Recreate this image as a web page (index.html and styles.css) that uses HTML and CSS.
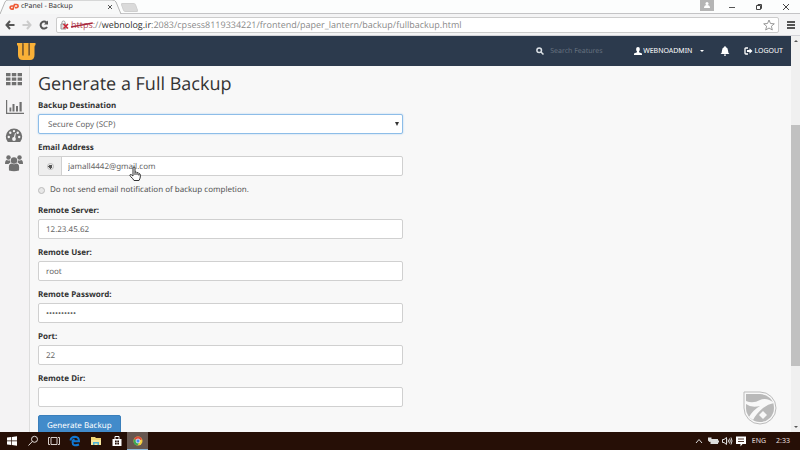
FILE: index.html
```html
<!DOCTYPE html>
<html lang="en">
<head>
  <meta charset="UTF-8">
  <title>cPanel - Backup</title>
  <link rel="stylesheet" href="styles.css">
</head>
<body>

  <div class="tabstrip">
    <div class="tab">
      <svg class="tab-shape" viewBox="0 0 122 14" preserveAspectRatio="none"><path d="M0 14 L5 2 Q6 0 8 0 H112 Q115 0 116 2 L121 14" fill="#f7f8f8" stroke="#b5b5b5"/></svg>
      <svg class="favicon" viewBox="0 0 10 8" fill="none" stroke="#ee5a35" stroke-width="1.700"><path d="M4.500 3 H2.800 A1.600 1.600 0 0 0 2.800 6.200 H4 L5.500 1.500 H7.500 A1.600 1.600 0 0 1 7.500 4.700 H6"/></svg>
      <span class="tab-title">cPanel - Backup</span>
      <button class="tab-close" aria-label="Close tab"><svg viewBox="0 0 6 6" stroke="#555"><path d="M1 1 L5 5 M5 1 L1 5"/></svg></button>
    </div>
    <button class="new-tab" aria-label="New tab"></button>
    <div class="window-buttons">
      <button class="profile" aria-label="Profile"><svg viewBox="0 0 14 11" fill="#fff"><circle cx="7" cy="3.500" r="1.500"/><path d="M4 8 Q4 5 7 5 Q10 5 10 8 Z"/></svg></button>
      <button aria-label="Minimize"><svg viewBox="0 0 8 8" stroke="#555"><path d="M1 4.500 H7"/></svg></button>
      <button aria-label="Restore"><svg viewBox="0 0 8 8" fill="none" stroke="#444"><path d="M1.500 2.500 H5.500 V6.500 H1.500 Z M3 2 V1.500 H6.500 V5.500 H6"/></svg></button>
      <button aria-label="Close"><svg viewBox="0 0 8 8" stroke="#444"><path d="M1 1 L7 7 M7 1 L1 7"/></svg></button>
    </div>
  </div>

  <div class="toolbar">
    <button aria-label="Back"><svg viewBox="0 0 10 10" fill="none" stroke="#555" stroke-width="2"><path d="M9.500 5 H1.500 M5 1 L1.500 5 L5 9"/></svg></button>
    <button aria-label="Forward"><svg viewBox="0 0 10 10" fill="none" stroke="#ccc" stroke-width="2"><path d="M.5 5 H8.500 M5 1 L8.500 5 L5 9"/></svg></button>
    <button aria-label="Reload"><svg viewBox="0 0 10 10" fill="none" stroke="#555" stroke-width="2"><path d="M8 7 A3.500 3.500 0 1 1 7.500 2.500"/><path d="M9 .5 V4.500 H5 Z" fill="#555" stroke="none"/></svg></button>
    <div class="address">
      <svg class="lock" viewBox="0 0 9 10" fill="none"><path d="M1 4 H6 V9 H1 Z" fill="#ddd" stroke="#999"/><path d="M2 4 V2.500 A1.500 1.500 0 0 1 5 2.500 V4" stroke="#999"/><path d="M3.500 4 L8 8.500 M8 4 L3.500 8.500" stroke="#c23" stroke-width="1.500"/></svg>
      <span class="url"><span class="bad">https<svg viewBox="0 0 22 8" preserveAspectRatio="none"><path d="M0 6 L22 2" stroke="#a8263b" stroke-width="1.300"/></svg></span>://<b>webnolog.ir</b>:2083/cpsess8119334221/frontend/paper_lantern/backup/fullbackup.html</span>
      <svg class="star" viewBox="0 0 12 12" fill="none" stroke="#999"><path d="M6 1 L7.500 4.500 L11.300 4.800 L8.400 7.200 L9.300 11 L6 9 L2.700 11 L3.600 7.200 L.7 4.800 L4.500 4.500 Z"/></svg>
    </div>
    <button aria-label="Menu"><svg viewBox="0 0 10 10" stroke="#555" stroke-width="2"><path d="M1 2 H9 M1 5 H9 M1 8 H9"/></svg></button>
  </div>

  <div class="viewport">
    <div class="page">
      <header class="header">
        <svg class="logo" viewBox="0 0 20 19"><path d="M1 1 H6.500 V12.500 Q6.500 14 7.300 14 V1 H12.700 V14 Q13.500 14 13.500 12.500 V1 H19.500 V3 Q18.500 3.500 18.500 5 V13 Q18.500 18 14 18 H7 Q2 18 2 13 V5 Q2 3.500 1 3 Z" fill="#f9b037"/><path d="M7 1.500 V13 M13.200 1.500 V13" stroke="#7a5528" stroke-width="1.200"/></svg>
        <label class="search">
          <svg viewBox="0 0 8 8" fill="none" stroke="#dce1e6" stroke-width="1.500"><circle cx="3.200" cy="3.200" r="2.300"/><path d="M5 5 L7.500 7.500"/></svg>
          <input type="text" placeholder="Search Features" aria-label="Search Features">
        </label>
        <button class="user">
          <svg viewBox="0 0 8 8" fill="#fff"><path d="M4 0 C6.500 0 6 3.500 5 4.500 V5.300 L8 6.500 V8 H0 V6.500 L3 5.300 V4.500 C2 3.500 1.500 0 4 0 Z"/></svg>
          WEBNOADMIN
          <span class="caret"></span>
        </button>
        <button class="bell" aria-label="Notifications"><svg viewBox="0 0 10 10" fill="#fff"><path d="M5 0 Q5.700 0 5.700 1 Q8 1.600 8 4.500 Q8 7 9.500 8 H.5 Q2 7 2 4.500 Q2 1.600 4.300 1 Q4.300 0 5 0 Z M4 8.500 H6 Q6 10 5 10 Q4 10 4 8.500 Z"/></svg></button>
        <a class="logout" href="#">
          <svg viewBox="0 0 9 8" fill="none" stroke="#fff" stroke-width="1.300"><path d="M4 1 H1.800 Q1 1 1 1.800 V6.200 Q1 7 1.800 7 H4"/><path d="M3 3 H5.500 V1.200 L8.500 4 L5.500 6.800 V5 H3 Z" fill="#fff" stroke="none"/></svg>
          LOGOUT
        </a>
      </header>

      <div class="body">
        <nav class="sidebar">
          <a href="#" aria-label="Home"><svg viewBox="0 0 18 18" fill="#707070"><path d="M1 3 H5.500 V6.300 H1 Z M6.800 3 H11.300 V6.300 H6.800 Z M12.600 3 H17 V6.300 H12.600 Z M1 7.500 H5.500 V10.800 H1 Z M6.800 7.500 H11.300 V10.800 H6.800 Z M12.600 7.500 H17 V10.800 H12.600 Z M1 12 H5.500 V15.300 H1 Z M6.800 12 H11.300 V15.300 H6.800 Z M12.600 12 H17 V15.300 H12.600 Z"/></svg></a>
          <a href="#" aria-label="Statistics"><svg viewBox="0 0 18 18" fill="#707070"><path d="M1 2 H2.200 V14.800 H19 V16 H1 Z M4.500 9.500 H6.300 V13.500 H4.500 Z M7.500 6 H9.500 V13.500 H7.500 Z M11 8 H13 V13.500 H11 Z M14.500 4 H16.700 V13.500 H14.500 Z"/></svg></a>
          <a href="#" aria-label="Dashboard"><svg viewBox="0 0 18 18"><path d="M2.800 16 A8.200 8.200 0 1 1 15.200 16 Z" fill="#707070"/><g fill="#f4f3f4"><circle cx="3.800" cy="11" r="1.200"/><circle cx="5.300" cy="6.800" r="1.200"/><circle cx="9" cy="5.100" r="1.200"/><circle cx="12.700" cy="6.800" r="1.200"/><circle cx="14.200" cy="11" r="1.200"/><circle cx="9" cy="13" r="1.900"/><path d="M8.500 12.500 L10 7 L10.900 7.300 L9.800 13 Z"/></g></svg></a>
          <a href="#" aria-label="Users"><svg viewBox="0 0 18 18" fill="#707070"><circle cx="9" cy="6.500" r="3.200"/><circle cx="3.500" cy="3.500" r="2.200"/><circle cx="14.500" cy="3.500" r="2.200"/><path d="M4 16.500 Q3 9.500 6.500 9.500 Q9 11 11.500 9.500 Q15 9.500 14 16.500 Q9 18 4 16.500 Z M0 10 Q0 6 2 6 Q3.500 7 5 6.300 L5.500 8.500 Q4 9 3.500 10 Z M18 10 Q18 6 16 6 Q14.500 7 13 6.300 L12.500 8.500 Q14 9 14.500 10 Z"/></svg></a>
        </nav>

        <main class="content">
          <h1>Generate a Full Backup</h1>
          <form>
            <div class="field">
              <label for="dest">Backup Destination</label>
              <div class="select">
                <select id="dest">
                  <option>Secure Copy (SCP)</option>
                </select>
              </div>
            </div>
            <div class="field">
              <label for="email">Email Address</label>
              <div class="group">
                <span class="addon"><input type="radio" name="notify" aria-label="Send email notification" checked></span>
                <input type="text" id="email" value="jamall4442@gmail.com">
                <svg class="cursor" viewBox="0 0 12 16" fill="#fff" stroke="#333"><path d="M4 9 V2 Q4 1 5 1 Q6 1 6 2 V6 Q7.500 5.500 8 6.700 Q9.500 6.300 9.800 7.500 Q11.300 7.500 11.300 9 V11 Q11 13 10 14.500 H5 Q4 12.500 1.500 10.500 Q.5 9.500 1 8.800 Q2 8 4 10 Z M6 6 V9 M8 7 V9 M9.800 8 V9.500"/></svg>
              </div>
              <label class="check"><input type="radio" name="notify">Do not send email notification of backup completion.</label>
            </div>
            <div class="field">
              <label for="server">Remote Server:</label>
              <input type="text" id="server" value="12.23.45.62">
            </div>
            <div class="field">
              <label for="user">Remote User:</label>
              <input type="text" id="user" value="root">
            </div>
            <div class="field">
              <label for="password">Remote Password:</label>
              <input type="password" id="password" value="aaaaaaaaaa">
            </div>
            <div class="field">
              <label for="port">Port:</label>
              <input type="text" id="port" value="22">
            </div>
            <div class="field">
              <label for="dir">Remote Dir:</label>
              <input type="text" id="dir">
            </div>
            <button type="button" class="submit">Generate Backup</button>
          </form>
        </main>
      </div>
    </div>

    <div class="scrollbar">
      <span class="arrow up"></span>
      <div class="track"><div class="thumb"></div></div>
      <span class="arrow down"></span>
    </div>

    <svg class="watermark" viewBox="0 0 36 36">
      <path d="M2 2 H18 A16 16 0 1 1 2 18 Z" fill="#f8f8f8" stroke="#bbb"/>
      <path d="M4 4 H18 A14 14 0 1 1 4 18 Z" fill="#b9b9b9"/>
      <path d="M4 11 Q11 14 18 10 Q25 7 32 13 Q26 14 21 18 Q14 24 11 30 L7 27 Q11 20 18 16 Q9 18 4 14 Z" fill="#f8f8f8"/>
      <path d="M21 21 L25 25 L21 29 L17 25 Z" fill="#f8f8f8"/>
    </svg>
  </div>

  <footer class="taskbar">
    <button aria-label="Start"><svg viewBox="0 0 12 12" fill="#fff"><path d="M1 2.500 L5.300 2 V5.600 H1 Z M6 1.900 L11 1.200 V5.600 H6 Z M1 6.300 H5.300 V10 L1 9.500 Z M6 6.300 H11 V10.800 L6 10.100 Z"/></svg></button>
    <button aria-label="Search"><svg viewBox="0 0 12 12" fill="none" stroke="#e5dedb"><circle cx="7.500" cy="4.300" r="3"/><path d="M5.300 6.500 L1.500 10.500"/></svg></button>
    <button aria-label="Task view"><svg viewBox="0 0 12 12" fill="none" stroke="#d8d0cc"><path d="M3 2.500 H9 V9.500 H3 Z M2 2.500 H.5 V9.500 H2 M10 2.500 H11.500 V9.500 H10"/></svg></button>
    <button aria-label="Edge"><svg viewBox="0 0 12 12" fill="none" stroke="#1177d1" stroke-width="2"><path d="M1.500 5.500 Q2 1.800 6 1.800 Q10 2 10 6.300 H4 M10 9.500 Q3.500 12 3.500 7 Q3.500 5 5.500 4.200"/></svg></button>
    <button aria-label="File Explorer"><svg viewBox="0 0 12 12"><path d="M1 2 H5 L6 3 H11 V10 H1 Z" fill="#f3d673"/><path d="M1 5 H11 V10 H1 Z" fill="#f8e79d"/><path d="M3 10 V7 H9 V10 H7.500 V8.500 H4.500 V10 Z" fill="#4bb2d8"/></svg></button>
    <button aria-label="Store"><svg viewBox="0 0 12 12"><path d="M1.500 4 H10.500 V11 H1.500 Z" fill="#fff"/><path d="M4 4 V1.500 H8 V4" fill="none" stroke="#fff"/><path d="M4 5.500 H5.700 V7.200 H4 Z M6.300 5.500 H8 V7.200 H6.300 Z M4 7.800 H5.700 V9.500 H4 Z M6.300 7.800 H8 V9.500 H6.300 Z" fill="#260f06"/></svg></button>
    <button class="active" aria-label="Chrome"><svg viewBox="0 0 12 12"><circle cx="6" cy="6" r="4.500" fill="#f5cd3e"/><path d="M6 6 L2 3.900 A4.500 4.500 0 0 1 10.200 4.300 Z" fill="#dc4b3e"/><path d="M6 6 L2 3.900 A4.500 4.500 0 0 0 5.500 10.500 L7 8 Z" fill="#3ea757"/><circle cx="6" cy="6" r="2" fill="#4a8af4" stroke="#fff" stroke-width=".7"/></svg></button>
    <div class="tray">
      <svg viewBox="0 0 12 12" fill="none" stroke="#ddd"><path d="M3 8 L6 4.500 L9 8"/></svg>
      <svg viewBox="0 0 12 12" fill="#ddd"><path d="M3.500 4 H11 V9 H3.500 Z M11 5.500 H12 V7.500 H11 Z M1 2.500 H4.500 V5.500 L3 7 H2.500 L1 5.500 Z"/></svg>
      <svg viewBox="0 0 12 12" fill="none" stroke="#ddd"><path d="M1.500 4.500 H3 L5.500 2.500 V9.500 L3 7.500 H1.500 Z M7 4.500 Q8 6 7 7.500 M8.500 3.500 Q10 6 8.500 8.500 M10 2.500 Q12 6 10 9.500"/></svg>
      <svg viewBox="0 0 12 12"><path d="M1 1.500 H11 V9 H7.500 L5.500 11.500 V9 H1 Z" fill="#fff"/><path d="M3 4 H9 M3 6.500 H9" stroke="#51392f"/></svg>
      <span class="lang">ENG</span>
      <span class="clock">2:33</span>
    </div>
  </footer>

</body>
</html>
```
FILE: styles.css
```css
* {
  box-sizing: border-box;
}
body {
  margin: 0;
  height: 100vh;
  display: flex;
  flex-direction: column;
  overflow: hidden;
  font-family: "Noto Sans", "Open Sans", sans-serif;
  font-size: 8px;
  text-rendering: geometricPrecision;
  color: #333;
  background: #f8f8f8;
}
button,
input,
select {
  text-rendering: inherit;
}
button {
  border: none;
  padding: 0;
  background: none;
  font-family: inherit;
  font-size: inherit;
  color: inherit;
  cursor: pointer;
}
svg {
  display: block;
  flex: none;
  overflow: visible;
}

/* browser tabs */
.tabstrip {
  height: 14px;
  display: flex;
  background: #fcfdfd;
  border-bottom: 1px solid #c4c4c6;
}
.tab {
  position: relative;
  width: 122px;
  display: flex;
  align-items: center;
  padding: 0 9px;
  font-size: 7px;
}
.tab > * {
  position: relative;
}
.tab .tab-shape {
  position: absolute;
  left: 0;
  top: 0;
  width: 100%;
  height: 14px;
}
.favicon {
  width: 10px;
  height: 8px;
}
.tab-title {
  flex: 1;
  padding-left: 2px;
}
.tab-close svg {
  width: 6px;
  height: 6px;
}
.new-tab {
  width: 15px;
  height: 9px;
  margin-top: 3px;
  background: #dadada;
  border: 1px solid #cfcfcf;
  border-radius: 2px;
  transform: skewX(20deg);
}
.window-buttons {
  display: flex;
  margin-left: auto;
  gap: 19px;
  padding-right: 10px;
  align-items: center;
}
.window-buttons svg {
  width: 8px;
  height: 8px;
}
.window-buttons .profile {
  align-self: flex-start;
  background: #b5b5b5;
  margin-right: -5px;
}
.window-buttons .profile svg {
  width: 14px;
  height: 11px;
}

/* address bar */
.toolbar {
  height: 22px;
  display: flex;
  align-items: center;
  gap: 7px;
  padding: 0 4px 0 5px;
  background: #f4f4f5;
  border-bottom: 1px solid #d3d3d8;
}
.toolbar button svg {
  width: 10px;
  height: 10px;
}
.address {
  flex: 1;
  height: 16px;
  display: flex;
  align-items: center;
  gap: 2px;
  padding: 0 3px;
  background: #fff;
  border: 1px solid #ccc;
  border-radius: 2px;
}
.lock {
  width: 9px;
  height: 10px;
}
.url {
  flex: 1;
  font-family: "Open Sans", sans-serif;
  font-size: 9px;
  line-height: 12px;
  color: #8a8a8a;
  white-space: nowrap;
}
.url b {
  font-weight: normal;
  color: #333;
}
.bad {
  position: relative;
  color: #b04a58;
}
.bad svg {
  position: absolute;
  left: 0;
  top: 3px;
  width: 100%;
  height: 8px;
}
.star {
  width: 12px;
  height: 12px;
}

/* page area */
.viewport {
  position: relative;
  flex: 1;
  min-height: 0;
  display: flex;
}
.page {
  flex: 1;
  display: flex;
  flex-direction: column;
  overflow: hidden;
}
.header {
  flex: none;
  height: 30px;
  display: flex;
  align-items: center;
  padding: 0 8px 0 16px;
  background: #2c3a4d;
  color: #fff;
  font-size: 7px;
}
.logo {
  width: 20px;
  height: 19px;
}
.search {
  display: flex;
  align-items: center;
  gap: 6px;
  margin-left: auto;
}
.search svg,
.user svg {
  width: 8px;
  height: 8px;
}
.search input {
  width: 76px;
  border: none;
  padding: 0;
  background: none;
  font-family: inherit;
  font-size: 7px;
  color: #fff;
}
.search input::placeholder {
  color: #66717f;
}
.user {
  display: flex;
  align-items: center;
  gap: 1px;
  margin-left: 8px;
}
.caret {
  margin-left: 7px;
  border: 2px solid transparent;
  border-top-color: #fff;
  border-bottom: none;
}
.bell {
  margin: 0 14px 0 16px;
}
.bell svg {
  width: 10px;
  height: 10px;
}
.logout {
  display: flex;
  align-items: center;
  gap: 1px;
  color: #fff;
  text-decoration: none;
}
.logout svg {
  width: 9px;
  height: 8px;
}
.body {
  flex: 1;
  min-height: 0;
  display: flex;
}
.sidebar {
  width: 30px;
  display: flex;
  flex-direction: column;
  gap: 10px;
  padding: 4px 0 0 5px;
  background: #f4f3f4;
  border-right: 1px solid #ddd;
}
.sidebar svg {
  width: 18px;
  height: 18px;
}
.content {
  flex: 1;
  padding: 7px 8px;
}
h1 {
  margin: 0 0 5px;
  font-family: "Open Sans", sans-serif;
  font-size: 18px;
  line-height: 22px;
  font-weight: normal;
}

/* backup form */
form {
  width: 49%;
}
.field {
  margin-bottom: 8px;
}
.field > label {
  display: block;
  margin-bottom: 2px;
  line-height: 12px;
  font-weight: bold;
}
.field > input,
.group,
select {
  display: block;
  width: 100%;
  height: 20px;
  padding: 0 7px;
  background: #fff;
  border: 1px solid #d0d0d0;
  border-radius: 2px;
  font-family: inherit;
  font-size: 8px;
  color: #666;
}
.select {
  position: relative;
}
.select::after {
  content: "";
  position: absolute;
  right: 4px;
  top: 8px;
  border: 2px solid transparent;
  border-top: 4px solid #333;
  border-bottom: none;
}
select {
  appearance: none;
  padding: 0 9px;
  border-color: #8dbde8;
  box-shadow: 0 0 2px #a8cdee;
}
.group {
  position: relative;
  display: flex;
  padding: 0;
}
.addon {
  width: 23px;
  display: flex;
  align-items: center;
  justify-content: center;
  background: #eee;
  border-right: 1px solid #d0d0d0;
}
.group input[type="text"] {
  flex: 1;
  border: none;
  padding: 0 6px;
  background: none;
  font-family: inherit;
  font-size: 8px;
  color: #666;
}
input[type="radio"] {
  appearance: none;
  width: 7px;
  height: 7px;
  margin: 0;
  border: 1px solid #bbb;
  border-radius: 50%;
  background: #e8e8e8;
}
input[type="radio"]:checked {
  background: radial-gradient(#555 0 2px, #eee 2px);
}
.cursor {
  position: absolute;
  left: 90px;
  top: 9px;
  width: 12px;
  height: 16px;
}
.field > .check {
  display: flex;
  align-items: center;
  gap: 5px;
  margin: 8px 0 9px;
  font-weight: normal;
  color: #555;
}
.submit {
  height: 20px;
  padding: 0 8px;
  background: #428bca;
  border: 1px solid #3a7fbb;
  border-radius: 2px;
  color: #fff;
}

/* scrollbar */
.scrollbar {
  width: 9px;
  display: flex;
  flex-direction: column;
  align-items: center;
  padding: 4px 0;
  background: #f0f0f0;
}
.track {
  flex: 1;
  align-self: stretch;
  margin: 4px 0;
}
.thumb {
  height: 64%;
  margin-top: 79px;
  background: #c1c1c1;
}
.arrow {
  border: 2px solid transparent;
}
.arrow.up {
  border-bottom-color: #555;
  border-top: none;
}
.arrow.down {
  border-top-color: #555;
  border-bottom: none;
}
.watermark {
  position: absolute;
  right: 22px;
  bottom: 6px;
  width: 36px;
  height: 36px;
}

/* taskbar */
.taskbar {
  flex: none;
  height: 18px;
  display: flex;
  padding-left: 1px;
  background: #260f06;
  color: #e5dedb;
}
.taskbar button {
  width: 21px;
  display: flex;
  align-items: center;
  justify-content: center;
}
.taskbar svg {
  width: 12px;
  height: 12px;
}
.taskbar .active {
  background: #665750;
  border-bottom: 1px solid #8ab6d6;
}
.tray {
  display: flex;
  align-items: center;
  gap: 2px;
  margin-left: auto;
  padding-right: 10px;
  font-size: 7px;
}
.lang {
  margin: 0 8px 0 3px;
}
```
